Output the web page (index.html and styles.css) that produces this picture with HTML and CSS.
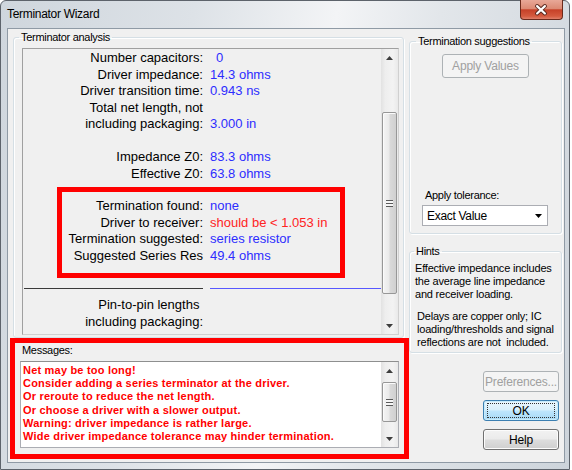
FILE: index.html
```html
<!DOCTYPE html>
<html lang="en">
<head>
  <meta charset="UTF-8" />
  <title>Terminator Wizard</title>
  <link rel="stylesheet" href="styles.css">
</head>
<body>
  <div class="window">
    <div class="titlebar">
      <span class="title">Terminator Wizard</span>
      <div class="close">
        <svg width="43" height="20" viewBox="0 0 43 20">
          <path d="M17.5 6 L25.5 13.5 M25.5 6 L17.5 13.5" stroke="#5b2a20" stroke-width="4.2" stroke-linecap="round"/>
          <path d="M17.5 6 L25.5 13.5 M25.5 6 L17.5 13.5" stroke="#ffffff" stroke-width="2.2" stroke-linecap="round"/>
        </svg>
      </div>
    </div>

    <div class="client">
      <div class="left-col">
        <fieldset class="group analysis">
          <legend>Terminator analysis</legend>
          <div class="group-body">
            <div class="panel">
              <div class="panel-body">
                <div class="rows">
                  <span class="lbl">Number capacitors:</span><span class="val indent">0</span>
                  <span class="lbl">Driver impedance:</span><span class="val">14.3 ohms</span>
                  <span class="lbl">Driver transition time:</span><span class="val">0.943 ns</span>
                  <span class="lbl">Total net length, not<br>including packaging:</span><span class="val">3.000 in</span>
                  <span class="lbl">&nbsp;</span><span></span>
                  <span class="lbl">Impedance Z0:</span><span class="val">83.3 ohms</span>
                  <span class="lbl">Effective Z0:</span><span class="val">63.8 ohms</span>
                </div>

                <div class="redbox">
                  <div class="rows inner">
                    <span class="lbl">Termination found:</span><span class="val">none</span>
                    <span class="lbl">Driver to receiver:</span><span class="val warn">should be &lt; 1.053 in</span>
                    <span class="lbl">Termination suggested:</span><span class="val">series resistor</span>
                    <span class="lbl">Suggested Series Res</span><span class="val">49.4 ohms</span>
                  </div>
                </div>

                <div class="divider">
                  <span class="line dark"></span>
                  <span class="line blue"></span>
                </div>

                <div class="rows pins">
                  <span class="lbl">Pin-to-pin lengths&nbsp;<br>including packaging:</span><span></span>
                </div>
              </div>

              <div class="vscroll main">
                <div class="sb-btn"><svg width="7" height="4" viewBox="0 0 7 4"><path d="M0 4 L3.5 0 L7 4Z" fill="#3d3d3d"/></svg></div>
                <div class="sb-track"><div class="sb-thumb"><span class="grip"></span></div></div>
                <div class="sb-btn"><svg width="7" height="4" viewBox="0 0 7 4"><path d="M0 0 L3.5 4 L7 0Z" fill="#3d3d3d"/></svg></div>
              </div>
            </div>
          </div>
        </fieldset>

        <div class="messages">
          <div class="msg-label">Messages:</div>
          <div class="msg-box">
            <div class="msg-text">
              Net may be too long!<br>
              Consider adding a series terminator at the driver.<br>
              Or reroute to reduce the net length.<br>
              Or choose a driver with a slower output.<br>
              Warning: driver impedance is rather large.<br>
              Wide driver impedance tolerance may hinder termination.
            </div>
            <div class="vscroll msg">
              <div class="sb-btn"><svg width="7" height="4" viewBox="0 0 7 4"><path d="M0 4 L3.5 0 L7 4Z" fill="#3d3d3d"/></svg></div>
              <div class="sb-track"><div class="sb-thumb"><span class="grip"></span></div></div>
              <div class="sb-btn"><svg width="7" height="4" viewBox="0 0 7 4"><path d="M0 0 L3.5 4 L7 0Z" fill="#3d3d3d"/></svg></div>
            </div>
          </div>
        </div>
      </div>

      <div class="right-col">
        <fieldset class="group suggest">
          <legend>Termination suggestions</legend>
          <div class="btn disabled apply">Apply Values</div>
          <div class="tol-label">Apply tolerance:</div>
          <div class="select">
            <span>Exact Value</span>
            <svg width="7" height="4" viewBox="0 0 7 4"><path d="M0 0 L3.5 4 L7 0Z" fill="#000"/></svg>
          </div>
        </fieldset>

        <fieldset class="group hints">
          <legend>Hints</legend>
          <div class="hint-body">
            <p>Effective impedance includes<br>the average line impedance<br>and receiver loading.</p>
            <p class="second">Delays are copper only; IC<br>loading/thresholds and signal<br>reflections are not&nbsp; included.</p>
          </div>
        </fieldset>

        <div class="buttons">
          <div class="btn disabled">Preferences...</div>
          <div class="btn default"><span>OK</span></div>
          <div class="btn">Help</div>
        </div>
      </div>
    </div>
  </div>
</body>
</html>
```

FILE: styles.css
```css
* {
  margin: 0;
  padding: 0;
  box-sizing: border-box;
}
body {
  background: #ffffff;
  font-family: 'Liberation Sans', Arial, sans-serif;
  font-size: 11px;
  color: #000;
}
.window {
  width: 570px;
  height: 470px;
  border: 1px solid #5d636b;
  border-radius: 6px 6px 0 0;
  background: linear-gradient(100deg, #cfd6dd 0%, #dde2e7 30%, #f3f4f6 52%, #e2e6ea 68%, #cdd4db 100%);
  display: flex;
  flex-direction: column;
  padding: 0 4px 6px 6px;
}
.titlebar {
  height: 27px;
  display: flex;
  align-items: flex-start;
}
.title {
  font-size: 12px;
  line-height: 15px;
  padding-top: 6px;
  letter-spacing: -0.3px;
}
.close {
  margin-left: auto;
  margin-right: 2px;
  margin-top: -1px;
  width: 43px;
  height: 20px;
  border: 1px solid #6b2a1c;
  border-top: none;
  border-radius: 0 0 4px 4px;
  background: linear-gradient(#e8a898 0%, #dc8a74 45%, #c64128 52%, #d45a3e 85%, #e0806a 100%);
  display: flex;
}
.close svg {
  margin-left: -1px;
}

.client {
  flex: 1;
  display: flex;
  background: #f0f0f0;
  border: 1px solid #8f9aa5;
}
.left-col {
  width: 401px;
  display: flex;
  flex-direction: column;
}
.right-col {
  flex: 1;
  display: flex;
  flex-direction: column;
}

/* group boxes */
.group {
  border: 1px solid #d5dfe5;
  border-radius: 3px;
  box-shadow: inset 1px 1px 0 #fff, 1px 1px 0 #fff;
  padding: 0;
  min-width: 0;
}
.group legend {
  font-size: 11px;
  line-height: 13px;
  padding: 0 2px;
  letter-spacing: -0.3px;
}
.analysis {
  margin: 2px 0 0 5px;
  width: 391px;
  height: 307px;
}
.analysis legend {
  margin-left: 5px;
}
.group-body {
  padding: 4px 4px 0 8px;
}

/* analysis panel */
.panel {
  display: flex;
  height: 287px;
  border: 1px solid #a0a0a0;
  border-right-color: #d0d0d0;
  border-bottom-color: #d0d0d0;
  background: #f0f0f0;
}
.panel-body {
  flex: 1;
  overflow: hidden;
  padding-top: 1px;
  font-size: 13px;
}
.rows {
  display: grid;
  grid-template-columns: 180px auto;
  column-gap: 7px;
  line-height: 16.5px;
}
.rows.inner {
  grid-template-columns: 141px auto;
}
.lbl {
  text-align: right;
  white-space: nowrap;
}
.val {
  align-self: end;
  color: #2d2dff;
  white-space: nowrap;
}
.val.indent {
  padding-left: 6px;
}
.val.warn {
  color: #ff2323;
}
.redbox {
  margin: 5px 0 0 34px;
  width: 288px;
  border: 5px solid #ff0000;
  padding: 6px 0 9px 0;
}
.divider {
  display: flex;
  margin-top: 10px;
  height: 1px;
}
.divider .line {
  height: 1px;
}
.divider .dark {
  margin-left: 1px;
  width: 180px;
  background: #3a3a3a;
}
.divider .blue {
  margin-left: 7px;
  width: 171px;
  background: #5757ff;
}
.pins {
  margin-top: 8px;
}

/* scrollbars */
.vscroll {
  width: 17px;
  display: flex;
  flex-direction: column;
  background: linear-gradient(to right, #e2e2e2 0%, #eeeeee 25%, #f3f3f3 70%, #e9e9e9 100%);
}
.sb-btn {
  height: 17px;
  display: flex;
  align-items: center;
  justify-content: center;
}
.sb-track {
  flex: 1;
  padding: 0 1px;
}
.sb-thumb {
  border: 1px solid #979797;
  border-radius: 2px;
  background: linear-gradient(to right, #f4f4f4 0%, #eaeaea 45%, #d9d9d9 55%, #d0d0d0 100%);
  box-shadow: inset 1px 1px 0 #fbfbfb;
  display: flex;
  align-items: center;
  justify-content: center;
}
.grip {
  width: 7px;
  height: 7px;
  background: repeating-linear-gradient(#5a5a5a 0 1px, #f6f6f6 1px 3px);
}
.vscroll.main .sb-thumb {
  margin-top: 46px;
  height: 182px;
}
.vscroll.msg .sb-thumb {
  margin-top: 3px;
  height: 40px;
}

/* messages */
.messages {
  margin-left: 2px;
  width: 399px;
  height: 121px;
  border: 5px solid #ff0000;
}
.msg-label {
  padding: 1px 0 0 7px;
  line-height: 13px;
  letter-spacing: -0.3px;
}
.msg-box {
  display: flex;
  margin: 4px 5px 0 5px;
  height: 87px;
  border: 1px solid #abadb3;
  border-top-color: #8e8f8f;
  background: #fff;
}
.msg-text {
  flex: 1;
  overflow: hidden;
  padding: 2px 0 0 2px;
  font-weight: bold;
  font-size: 11px;
  line-height: 13.2px;
  letter-spacing: 0.2px;
  color: #ff0000;
  white-space: nowrap;
}

/* right side */
.suggest {
  margin: 6px 0 0 0;
  width: 153px;
  height: 199px;
}
.suggest legend {
  margin-left: 6px;
}
.hints {
  margin-top: 11px;
  width: 153px;
  height: 108px;
}
.hints legend {
  margin-left: 4px;
}
.hint-body {
  padding: 4px 2px 0 5px;
  line-height: 13px;
  letter-spacing: -0.2px;
}
.hint-body .second {
  margin-top: 9px;
  padding-left: 2px;
}
.tol-label {
  margin: 111px 0 0 15px;
  line-height: 13px;
  letter-spacing: -0.3px;
}
.select {
  margin: 3px 0 0 12px;
  width: 126px;
  height: 21px;
  border: 1px solid #abadb3;
  background: #fff;
  display: flex;
  align-items: center;
  justify-content: space-between;
  padding: 0 5px 0 4px;
  font-size: 12px;
  letter-spacing: -0.3px;
}

.btn {
  width: 76px;
  height: 21px;
  border: 1px solid #707070;
  border-radius: 3px;
  background: linear-gradient(#f2f2f2 0%, #ebebeb 48%, #dddddd 52%, #cfcfcf 100%);
  box-shadow: inset 0 0 0 1px #fcfcfc;
  display: flex;
  align-items: center;
  justify-content: center;
  font-size: 12px;
  letter-spacing: -0.2px;
}
.btn.disabled {
  border-color: #adb2b5;
  background: #f4f4f4;
  box-shadow: none;
  color: #a0a0a0;
}
.btn.apply {
  width: 87px;
  height: 24px;
  margin: 6px auto 0 auto;
}
.btn.default {
  border-color: #3c7fb1;
  background: linear-gradient(#eaf6fd 0%, #d9f0fc 48%, #bee6fd 52%, #a7d9f5 100%);
  box-shadow: inset 0 0 0 1px #c8ecfc;
}
.btn.default span {
  display: block;
  width: 68px;
  height: 15px;
  line-height: 15px;
  text-align: center;
  border: 1px dotted #333;
}
.buttons {
  margin-top: 18px;
  padding-right: 5px;
  display: flex;
  flex-direction: column;
  align-items: flex-end;
  gap: 8px;
}
```
